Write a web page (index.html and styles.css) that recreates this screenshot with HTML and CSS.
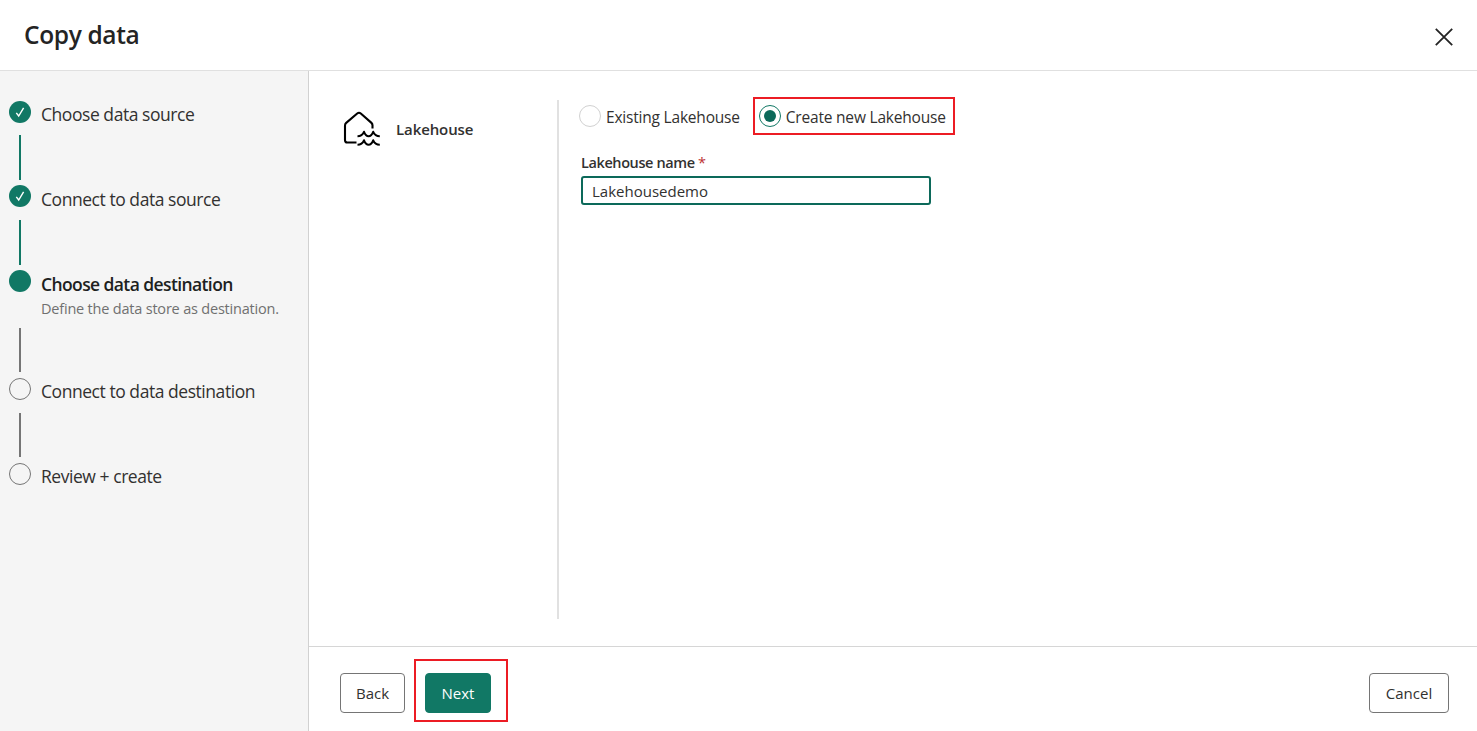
FILE: index.html
```html
<!DOCTYPE html>
<html lang="en">

<head>
    <meta charset="UTF-8">
    <meta name="viewport" content="width=device-width, initial-scale=1.0">
    <title>Copy data</title>
    <link rel="stylesheet" href="styles.css">
</head>

<body>
    <header class="header">
        <h1>Copy data</h1>
        <button class="close" aria-label="Close">
            <svg width="20" height="20" viewBox="0 0 20 20">
                <path d="M1.8 1.8L18.2 18.2M18.2 1.8L1.8 18.2" fill="none" stroke="#242424" stroke-width="1.8"/>
            </svg>
        </button>
    </header>

    <div class="container">
        <nav class="sidebar">
            <div class="step done">
                <div class="track">
                    <span class="dot"><svg width="22" height="22" viewBox="0 0 22 22"><path d="M7.3 11.8L9.7 15L14.6 6.8"/></svg></span>
                    <span class="line"></span>
                </div>
                <div class="step-text"><span class="step-title">Choose data source</span></div>
            </div>
            <div class="step done">
                <div class="track">
                    <span class="dot"><svg width="22" height="22" viewBox="0 0 22 22"><path d="M7.3 11.8L9.7 15L14.6 6.8"/></svg></span>
                    <span class="line"></span>
                </div>
                <div class="step-text"><span class="step-title">Connect to data source</span></div>
            </div>
            <div class="step active">
                <div class="track">
                    <span class="dot"></span>
                    <span class="line"></span>
                </div>
                <div class="step-text">
                    <span class="step-title">Choose data destination</span>
                    <span class="step-desc">Define the data store as destination.</span>
                </div>
            </div>
            <div class="step">
                <div class="track">
                    <span class="dot"></span>
                    <span class="line"></span>
                </div>
                <div class="step-text"><span class="step-title">Connect to data destination</span></div>
            </div>
            <div class="step">
                <div class="track">
                    <span class="dot"></span>
                </div>
                <div class="step-text"><span class="step-title">Review + create</span></div>
            </div>
        </nav>

        <main class="main">
            <div class="content">
                <div class="store">
                    <svg width="38" height="36" viewBox="0 0 38 36">
                        <g fill="none" stroke="#000" stroke-width="2.1" stroke-linejoin="round">
                            <path d="M13.5 31.5H4.2Q2 31.5 2 29.3V14.5Q2 12.9 3.2 11.9L14.2 2.5Q16 1 17.8 2.5L28.2 11.6Q29.5 12.7 29.5 14.3V17.5"/>
                            <path d="M14.5 25.2C18 25.2 19.8 23.6 21 20.8C22.2 23.8 23.4 25.2 25.6 25.2C27.8 25.2 29 23.8 30.2 20.8C31.4 23.6 33.2 25.2 36.8 25.2"/>
                            <path d="M14.5 33.7C18 33.7 19.8 32.1 21 29.3C22.2 32.3 23.4 33.7 25.6 33.7C27.8 33.7 29 32.3 30.2 29.3C31.4 32.1 33.2 33.7 36.8 33.7"/>
                        </g>
                    </svg>
                    <span class="store-name">Lakehouse</span>
                </div>

                <form class="form">
                    <div class="options">
                        <label class="option"><span class="radio"></span><span class="option-text">Existing Lakehouse</span></label>
                        <label class="option marked"><span class="radio checked"></span><span class="option-text">Create new Lakehouse</span></label>
                    </div>
                    <label class="field-label" for="lakehouseName">Lakehouse name <span class="required">*</span></label>
                    <input type="text" id="lakehouseName" value="Lakehousedemo">
                </form>
            </div>

            <footer class="footer">
                <button class="btn back">Back</button>
                <div class="marked-next">
                    <button class="btn primary">Next</button>
                </div>
                <button class="btn cancel">Cancel</button>
            </footer>
        </main>
    </div>
</body>

</html>
```
FILE: styles.css
```css
* {
    box-sizing: border-box;
}

body {
    margin: 0;
    height: 100vh;
    display: flex;
    flex-direction: column;
    overflow: hidden;
    background-color: #fff;
    color: #323130;
    font-family: "Open Sans", "Noto Sans", sans-serif;
    font-size: 15px;
}

button {
    font-family: inherit;
    cursor: pointer;
}

.header {
    display: flex;
    justify-content: space-between;
    height: 71px;
    padding: 0 23px 0 24px;
    border-bottom: 1px solid #e0e0e0;
}

h1 {
    margin: 0;
    font-size: 24.5px;
    font-weight: 600;
    line-height: 69px;
    letter-spacing: -0.35px;
    color: #242424;
}

.close {
    display: flex;
    align-self: flex-start;
    margin-top: 27px;
    padding: 0;
    border: none;
    background: none;
}

.container {
    display: flex;
    flex: 1;
    min-height: 0;
}

/* wizard steps */
.sidebar {
    width: 309px;
    padding: 29.5px 0 0 9px;
    border-right: 1px solid #d1d1d1;
    background-color: #f5f5f5;
}

.step {
    display: flex;
    gap: 10px;
    height: 84.75px;
}

.step.active {
    height: 107.75px;
}

.track {
    display: flex;
    flex-direction: column;
    align-items: center;
    justify-content: space-between;
    width: 22px;
    padding-bottom: 5.5px;
}

.dot {
    display: flex;
    width: 22px;
    height: 22px;
    border: 1px solid #757575;
    border-radius: 50%;
}

.done .dot,
.active .dot {
    border: none;
    background-color: #117865;
}

.dot path {
    fill: none;
    stroke: #fff;
    stroke-width: 1.4;
}

.line {
    width: 2px;
    height: 44.5px;
    background-color: #757575;
}

.done .line {
    background-color: #117865;
}

.step-text {
    display: flex;
    flex-direction: column;
    padding-top: 1.5px;
    white-space: nowrap;
}

.step-title {
    font-size: 17.5px;
    line-height: 25px;
    letter-spacing: -0.45px;
}

.active .step-title {
    font-weight: 600;
    letter-spacing: -0.6px;
    color: #201f1e;
}

.step-desc {
    font-size: 14.5px;
    line-height: 24px;
    letter-spacing: -0.2px;
    color: #707070;
}

.main {
    display: flex;
    flex-direction: column;
    flex: 1;
}

.content {
    display: flex;
    flex: 1;
    padding: 29px 0 27px 34px;
}

.store {
    display: flex;
    align-items: flex-start;
    gap: 15px;
    width: 216px;
    padding-top: 11px;
    border-right: 2px solid #e1e1e1;
}

.store-name {
    font-weight: 600;
    line-height: 37px;
    letter-spacing: -0.1px;
}

/* destination form */
.form {
    padding-left: 20px;
}

.options {
    display: flex;
    align-items: center;
    gap: 13px;
    height: 38px;
    margin-top: -3px;
}

.option {
    display: flex;
    align-items: center;
    gap: 5px;
    font-size: 15.5px;
    letter-spacing: -0.2px;
    white-space: nowrap;
}

.option-text {
    padding-top: 2px;
}

.marked {
    height: 38px;
    padding: 0 7px 0 4px;
    border: 2px solid #ec1c24;
}

.radio {
    display: flex;
    align-items: center;
    justify-content: center;
    width: 22px;
    height: 22px;
    border: 1px solid #d1d1d1;
    border-radius: 50%;
}

.radio.checked {
    border-color: #117865;
}

.radio.checked::after {
    content: "";
    width: 12px;
    height: 12px;
    border-radius: 50%;
    background-color: #0c695a;
}

.field-label {
    display: block;
    margin: 17px 0 3px 2px;
    font-size: 14.5px;
    font-weight: 600;
    line-height: 21px;
    letter-spacing: -0.4px;
}

.required {
    color: #bc2f32;
    font-weight: 400;
}

input[type="text"] {
    display: block;
    width: 350px;
    height: 29px;
    margin-left: 2px;
    padding: 1px 9px 0;
    border: 2px solid #0c695a;
    border-radius: 3px;
    outline: none;
    color: #323130;
    font-family: inherit;
    font-size: 15px;
}

.footer {
    display: flex;
    align-items: center;
    height: 85px;
    padding: 7px 28px 0 31px;
    border-top: 1px solid #d6d6d6;
}

.btn {
    height: 40px;
    padding: 0;
    border: 1px solid #757575;
    border-radius: 4px;
    background-color: #fff;
    color: #323130;
    font-size: 15px;
}

.back {
    width: 65px;
}

.primary {
    width: 66px;
    border-color: #117865;
    background-color: #117865;
    color: #fff;
}

.cancel {
    width: 80px;
    margin-left: auto;
}

.marked-next {
    width: 94px;
    height: 63px;
    margin: -5px 0 0 9px;
    padding: 12px 0 0 9px;
    border: 2px solid #ec1c24;
}
```
